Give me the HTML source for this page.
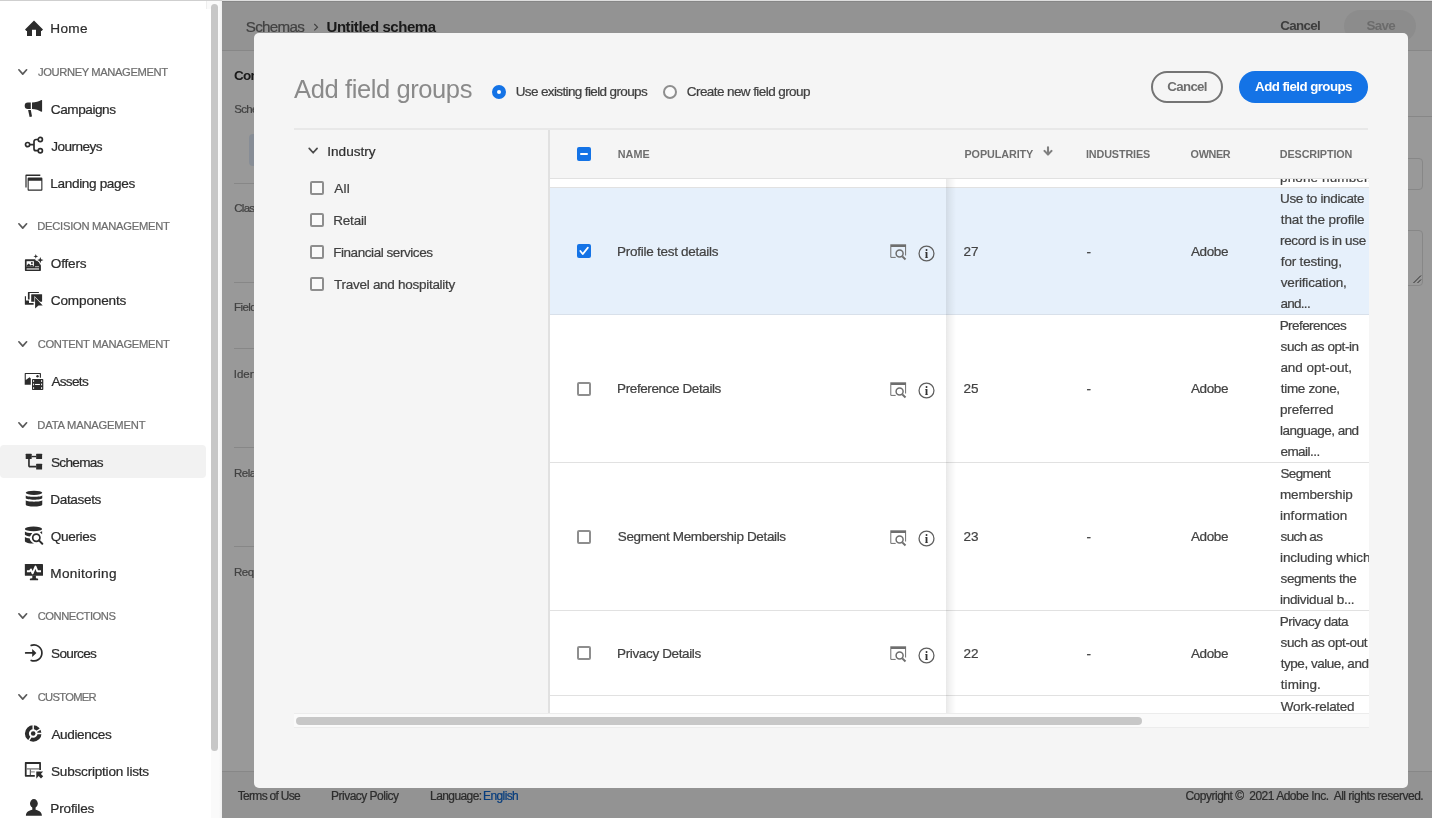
<!DOCTYPE html>
<html lang="en">
<head>
<meta charset="utf-8">
<title>Add field groups</title>
<style>
html,body{margin:0;padding:0;width:1432px;height:818px;overflow:hidden;background:#fff;}
body{font-family:"Liberation Sans",Arial,sans-serif;position:relative;}
.t{position:absolute;white-space:pre;line-height:1;-webkit-text-stroke:0.22px currentColor;}
.abs{position:absolute;}
#side{position:absolute;left:0;top:0;width:222px;height:818px;background:#fff;overflow:hidden;}
#side,#page,#modal{will-change:transform;}
#side .selbg{position:absolute;left:0;top:445px;width:205.5px;height:33px;border-radius:4px;background:#f2f2f2;}
#side .track{position:absolute;left:211px;top:0;width:11px;height:818px;background:linear-gradient(90deg,#fafafa 0,#fafafa 8px,#efefef 11px);}
#side .thumb{position:absolute;left:211px;top:4px;width:7px;height:747px;border-radius:4px;background:#c7c7c7;}
#side svg{position:absolute;overflow:visible;}
#page{position:absolute;left:222px;top:0;width:1210px;height:818px;background:#fff;overflow:hidden;}
#page .hdr{position:absolute;left:0;top:0;width:1210px;height:50px;background:#f5f5f5;border-bottom:1px solid #e1e1e1;}
#page .ftr{position:absolute;left:0;top:771px;width:1210px;height:47px;background:#f5f5f5;border-top:1px solid #e1e1e1;box-sizing:border-box;}
#page .save{position:absolute;left:1122px;top:10px;width:72px;height:32px;border-radius:16px;background:#eaeaea;}
#page .hl{position:absolute;height:1px;background:#e1e1e1;}
#ovl{position:absolute;left:222px;top:0;width:1210px;height:818px;background:rgba(0,0,0,.4);}
#topline{position:absolute;left:0;top:0;width:1432px;height:1px;background:linear-gradient(90deg,#cfcfcf 0,#cfcfcf 222px,#dedede 222px);}
#topline2{position:absolute;left:222px;top:1px;width:1210px;height:1px;background:#868686;}
#modal{position:absolute;left:254px;top:33px;width:1154px;height:755px;background:#f5f5f5;border-radius:5px;overflow:hidden;}
#modal .divider{position:absolute;left:40px;top:95px;width:1074px;height:2px;background:#e8e8e8;}
#modal .vline{position:absolute;left:294px;top:97px;width:2px;height:583px;background:#e1e1e1;}
.radio{position:absolute;width:14px;height:14px;border-radius:50%;box-sizing:border-box;}
.radio.on{border:5px solid #1473e6;background:#fff;}
.radio.off{border:2px solid #8e8e8e;background:#fafafa;}
.btn{position:absolute;height:32px;border-radius:16px;box-sizing:border-box;}
.cb{position:absolute;width:14px;height:14px;box-sizing:border-box;border:2px solid #8e8e8e;border-radius:2px;background:#fafafa;}
.cb.on{border:0;background:#1473e6;}
#thead{position:absolute;left:296px;top:97px;width:819px;height:48px;border-bottom:1px solid #e1e1e1;}
#tbody{position:absolute;left:296px;top:146px;width:819px;height:534px;background:#fff;overflow:hidden;}
#tbody .row{position:absolute;left:0;width:819px;border-bottom:1px solid #e1e1e1;background:#fff;}
#tbody .row.sel{background:#e6f0fb;border-bottom-color:#d8e0ea;}
#tbody .shadow{position:absolute;left:396px;top:0;width:10px;height:534px;background:linear-gradient(90deg,rgba(0,0,0,.09),rgba(0,0,0,.05) 35%,rgba(0,0,0,0) 100%);}
#tbody svg{position:absolute;overflow:visible;}
#hscroll{position:absolute;left:40px;top:680px;width:1075px;height:15px;background:#fafafa;border-top:1px solid #ececec;border-bottom:1px solid #ececec;box-sizing:border-box;}
#hscroll i{position:absolute;left:2px;top:3px;width:846px;height:8px;border-radius:4px;background:#c7c7c7;}
</style>
</head>
<body>
<div id="side">
<div class="selbg"></div>
<div class="track"></div><div class="abs" style="left:206px;top:1px;width:5px;height:8px;background:#fafafa;border-left:1px solid #eee"></div><div class="thumb"></div>
<svg style="left:25px;top:19px" width="18" height="18" viewBox="0 0 18 18" fill="#2c2c2c" ><path d="M9 1.6 L18 10.4 L16.6 11.9 H16 V17 H11 V10.8 H7 V17 H2 V11.9 H1.4 L0 10.4z"/></svg>
<svg style="left:25px;top:100px" width="18" height="18" viewBox="0 0 18 18" fill="#2c2c2c" ><path d="M2.9 2.5H5.8V8.9H2.9a3.2 3.2 0 0 1 0-6.4z"/><path d="M7 2.5C10.5 2.5 14 1.8 16.3.1L17.1.3V11.5l-.8.2C14 10 10.5 8.9 7 8.9z"/><path d="M3.1 10.1H5.8L7 16.6 4.6 17z"/></svg>
<svg style="left:25px;top:137px" width="18" height="18" viewBox="0 0 18 18" fill="#2c2c2c" ><g fill="none" stroke="#2c2c2c" stroke-width="1.7"><circle cx="2.6" cy="7.6" r="2.1"/><circle cx="15.3" cy="2.5" r="2.1"/><circle cx="15.3" cy="13.7" r="2.1"/><path d="M4.7 7.6H9M13.2 2.5H11a2 2 0 0 0-2 2v7.2a2 2 0 0 0 2 2h2.2"/></g></svg>
<svg style="left:25px;top:174px" width="18" height="18" viewBox="0 0 18 18" fill="#2c2c2c" ><path fill-rule="evenodd" d="M3.5 3.6h13a.9.9 0 0 1 .9.9v11.3a.9.9 0 0 1-.9.9h-13a.9.9 0 0 1-.9-.9V4.500a.9.9 0 0 1 .9-.9zM3.7 6.8v8.8h12.600V6.800z"/><path d="M1.200.5h14.100v1.600H1.600v11.400H.4V1.300a.8.8 0 0 1 .8-.8z"/></svg>
<svg style="left:25px;top:254px" width="18" height="18" viewBox="0 0 18 18" fill="#2c2c2c" ><path d="M.6 5.300H9.800L15.900 9.500V16.200a.7.7 0 0 1-.7.7H.6a.7.7 0 0 1-.7-.7V6a.7.7 0 0 1 .7-.7z"/><rect x="1.600" y="7.200" width="7.300" height="5.600" fill="#fff"/><path d="M1.600 12.800V11.600L3.800 9.400 5.600 11.600 7 10.600 8.900 12.300V12.800z"/><circle cx="6.900" cy="8.900" r="1"/><rect x="1.600" y="14.200" width="12.400" height="1.500" fill="#c4c4c4"/><rect x="10" y="12.100" width="4" height="1.100" fill="#b0b0b0"/><path d="M15.30 2.90L16.11 5.29L18.50 6.10L16.11 6.91L15.30 9.30L14.49 6.91L12.10 6.10L14.49 5.29z" stroke="#fff" stroke-width="1.400" paint-order="stroke"/><path d="M10.80 0.00L11.41 1.79L13.20 2.40L11.41 3.01L10.80 4.80L10.19 3.01L8.40 2.40L10.19 1.79z" stroke="#fff" stroke-width="1" paint-order="stroke"/></svg>
<svg style="left:25px;top:291px" width="18" height="18" viewBox="0 0 18 18" fill="#2c2c2c" ><path d="M-.15 5.300H1V9.500H4V12H8.600V13.800H.4a.55.55 0 0 1-.55-.55z"/><path d="M3.400 1H13.900V2.100H4.600V8.500H2.900V1.500a.5.5 0 0 1 .5-.5z"/><rect x="6.200" y="3.200" width="10.900" height="7.550" rx=".5"/><path d="M10.100 6.600L17.700 14.500 13.500 14.600 10.100 17.600z" stroke="#fff" stroke-width="1.300" paint-order="stroke"/></svg>
<svg style="left:25px;top:372px" width="18" height="18" viewBox="0 0 18 18" fill="#2c2c2c" ><path d="M.3 1H15.300a.65.65 0 0 1 .65.65V5.800H14.800V2.100H.8V8L4.600 5.200 5.800 6.400V12.800H-.3V1.600A.6.6 0 0 1 .3 1z"/><circle cx="12.500" cy="4.250" r="1.200"/><rect x="7" y="7" width="11.300" height="10.900" rx=".7"/><g fill="#fff"><rect x="8.100" y="8.200" width="1" height="1.700"/><rect x="8.100" y="11.600" width="1" height="1.700"/><rect x="8.100" y="15.200" width="1" height="1.700"/><rect x="16.100" y="8.200" width="1" height="1.700"/><rect x="16.100" y="11.600" width="1" height="1.700"/><rect x="16.100" y="15.200" width="1" height="1.700"/><rect x="10.100" y="11.950" width="4.800" height="1.050"/></g></svg>
<svg style="left:25px;top:453px" width="18" height="18" viewBox="0 0 18 18" fill="#2c2c2c" ><rect x=".7" y=".8" width="6" height="5.300" rx=".5"/><rect x="11.150" y=".8" width="5.950" height="5.300" rx=".5"/><rect x="11.150" y="10.750" width="5.950" height="5.850" rx=".5"/><path d="M6.500 3.550H11.300" stroke="#2c2c2c" stroke-width="1.400" fill="none"/><path d="M3.950 6V12.650a1 1 0 0 0 1 1H11.300" stroke="#2c2c2c" stroke-width="1.650" fill="none"/></svg>
<svg style="left:25px;top:490px" width="18" height="18" viewBox="0 0 18 18" fill="#2c2c2c" ><ellipse cx="9" cy="2.800" rx="8.250" ry="2.150"/><path d="M.75 5.200C.75 7.300 17.250 7.300 17.250 5.200V8C17.250 10.300 .75 10.300 .75 8z"/><path d="M.75 10C.75 12.200 17.250 12.200 17.250 10V14.400C17.250 17.200 .75 17.200 .75 14.400z"/></svg>
<svg style="left:25px;top:527px" width="18" height="18" viewBox="0 0 18 18" fill="#2c2c2c" ><ellipse cx="8.500" cy="1.900" rx="8.600" ry="2.300"/><path d="M-.1 4.500C1 5.500 4 6 7.200 6L5 9.500C2.500 9.200 .5 8.600-.1 7.800z"/><path d="M-.1 9.900C1 10.800 2.800 11.100 4.600 11.300 4.900 13.400 6.500 15.500 9 16.600 4.500 16.700.5 15.700-.1 14.300z"/><path d="M14.900 5.200L17.100 4.300V7.300z"/><circle cx="11.300" cy="10.750" r="3.600" fill="none" stroke="#2c2c2c" stroke-width="1.700"/><path d="M13.900 13.400L17.300 16.700" stroke="#2c2c2c" stroke-width="2" stroke-linecap="round"/></svg>
<svg style="left:25px;top:564px" width="18" height="18" viewBox="0 0 18 18" fill="#2c2c2c" ><rect x="-.15" y="0" width="18.150" height="11.800" rx=".6"/><path d="M7.300 11.500H10.900V14.100C10.900 14.400 11.600 14.500 12.500 14.500a.7.900 0 0 1 0 1.800H5.500a.7.900 0 0 1 0-1.800C6.500 14.500 7.300 14.400 7.300 14.100z"/><path d="M1.900 7.200H4.800L5.900 5.400 7.600 9.300 10.500 2.500 12.300 7.200H16" fill="none" stroke="#fff" stroke-width="1.900" stroke-linejoin="round"/></svg>
<svg style="left:25px;top:644px" width="18" height="18" viewBox="0 0 18 18" fill="#2c2c2c" ><path d="M6.200 1.370A8 8 0 1 1 6.200 16.430" fill="none" stroke="#2c2c2c" stroke-width="1.700" stroke-linecap="round"/><path d="M.7 8.900H8" stroke="#2c2c2c" stroke-width="1.700" stroke-linecap="round"/><path d="M7.200 4.900L11.400 8.900 7.200 12.900z"/></svg>
<svg style="left:25px;top:725px" width="18" height="18" viewBox="0 0 18 18" fill="#2c2c2c" ><circle cx="8.200" cy="8.500" r="6.300" fill="none" stroke="#2c2c2c" stroke-width="4"/><path d="M8.20 5.90L8.20 -0.70M10.40 7.12L16.00 3.62M10.80 8.50L17.40 8.50M6.82 10.70L3.32 16.30" stroke="#fff" stroke-width="1.400" fill="none"/><circle cx="8.200" cy="8.500" r="2.300"/></svg>
<svg style="left:25px;top:762px" width="18" height="18" viewBox="0 0 18 18" fill="#2c2c2c" ><path d="M.5.100H15.300a.65.65 0 0 1 .65.650V8H14.200V2H1.600V13H9.800V14.700H.5a.65.65 0 0 1-.65-.650V.75A.65.650 0 0 1 .5.100z"/><rect x="1.600" y="6.300" width="12.600" height="1.200" fill="#6a6a6a"/><rect x="4.800" y="7.400" width="1.050" height="5.700" fill="#4a4a4a"/><rect x="5.850" y="9.400" width="3.950" height="1" fill="#7a7a7a"/><path d="M11.300 9.600H18.100L15.900 11.900 18.200 14.300 16 16.500 13.600 14.100 11.300 16.700z"/></svg>
<svg style="left:25px;top:799px" width="18" height="19" viewBox="0 0 18 19" fill="#2c2c2c" ><ellipse cx="8.900" cy="4.500" rx="3.900" ry="4.400"/><path d="M7.300 7.500V10.800C4 11.400 1 13 .9 16.700H16.900C16.800 13 13.800 11.400 10.600 10.800V7.500z"/></svg>
<svg style="left:17px;top:67px" width="12" height="10" viewBox="0 0 12 10" fill="none" stroke="#5a5a5a" stroke-width="1.700" stroke-linecap="round" stroke-linejoin="round"><path d="M1.900 2.800L5.750 7.100 9.600 2.800"/></svg>
<svg style="left:17px;top:221px" width="12" height="10" viewBox="0 0 12 10" fill="none" stroke="#5a5a5a" stroke-width="1.700" stroke-linecap="round" stroke-linejoin="round"><path d="M1.900 2.800L5.750 7.100 9.600 2.800"/></svg>
<svg style="left:17px;top:339px" width="12" height="10" viewBox="0 0 12 10" fill="none" stroke="#5a5a5a" stroke-width="1.700" stroke-linecap="round" stroke-linejoin="round"><path d="M1.900 2.800L5.750 7.100 9.600 2.800"/></svg>
<svg style="left:17px;top:420px" width="12" height="10" viewBox="0 0 12 10" fill="none" stroke="#5a5a5a" stroke-width="1.700" stroke-linecap="round" stroke-linejoin="round"><path d="M1.900 2.800L5.750 7.100 9.600 2.800"/></svg>
<svg style="left:17px;top:611px" width="12" height="10" viewBox="0 0 12 10" fill="none" stroke="#5a5a5a" stroke-width="1.700" stroke-linecap="round" stroke-linejoin="round"><path d="M1.900 2.800L5.750 7.100 9.600 2.800"/></svg>
<svg style="left:17px;top:692px" width="12" height="10" viewBox="0 0 12 10" fill="none" stroke="#5a5a5a" stroke-width="1.700" stroke-linecap="round" stroke-linejoin="round"><path d="M1.900 2.800L5.750 7.100 9.600 2.800"/></svg>

<span class="t" style="left:50.3px;top:21.6px;font-size:13.6px;color:#2c2c2c;letter-spacing:0.31px;">Home</span>
<span class="t" style="left:50.8px;top:102.6px;font-size:13.6px;color:#2c2c2c;letter-spacing:-0.44px;">Campaigns</span>
<span class="t" style="left:51.2px;top:139.6px;font-size:13.6px;color:#2c2c2c;letter-spacing:-0.56px;">Journeys</span>
<span class="t" style="left:50.3px;top:176.6px;font-size:13.6px;color:#2c2c2c;letter-spacing:-0.35px;">Landing pages</span>
<span class="t" style="left:50.8px;top:256.6px;font-size:13.6px;color:#2c2c2c;letter-spacing:-0.2px;">Offers</span>
<span class="t" style="left:50.8px;top:293.6px;font-size:13.6px;color:#2c2c2c;letter-spacing:-0.17px;">Components</span>
<span class="t" style="left:51.4px;top:374.6px;font-size:13.6px;color:#2c2c2c;letter-spacing:-0.7px;">Assets</span>
<span class="t" style="left:51.0px;top:455.6px;font-size:13.6px;color:#2c2c2c;letter-spacing:-0.7px;">Schemas</span>
<span class="t" style="left:50.3px;top:492.6px;font-size:13.6px;color:#2c2c2c;letter-spacing:-0.37px;">Datasets</span>
<span class="t" style="left:50.8px;top:529.6px;font-size:13.6px;color:#2c2c2c;letter-spacing:-0.36px;">Queries</span>
<span class="t" style="left:50.3px;top:566.6px;font-size:13.6px;color:#2c2c2c;letter-spacing:0.31px;">Monitoring</span>
<span class="t" style="left:51.0px;top:646.6px;font-size:13.6px;color:#2c2c2c;letter-spacing:-0.67px;">Sources</span>
<span class="t" style="left:51.4px;top:727.6px;font-size:13.6px;color:#2c2c2c;letter-spacing:-0.4px;">Audiences</span>
<span class="t" style="left:51.0px;top:764.6px;font-size:13.6px;color:#2c2c2c;letter-spacing:-0.23px;">Subscription lists</span>
<span class="t" style="left:50.3px;top:801.6px;font-size:13.6px;color:#2c2c2c;letter-spacing:-0.18px;">Profiles</span>
<span class="t" style="left:38.1px;top:66.6px;font-size:11.2px;color:#6e6e6e;letter-spacing:-0.39px;">JOURNEY MANAGEMENT</span>
<span class="t" style="left:37.3px;top:220.6px;font-size:11.2px;color:#6e6e6e;letter-spacing:-0.27px;">DECISION MANAGEMENT</span>
<span class="t" style="left:37.7px;top:338.6px;font-size:11.2px;color:#6e6e6e;letter-spacing:-0.3px;">CONTENT MANAGEMENT</span>
<span class="t" style="left:37.3px;top:419.6px;font-size:11.2px;color:#6e6e6e;letter-spacing:-0.19px;">DATA MANAGEMENT</span>
<span class="t" style="left:37.7px;top:610.6px;font-size:11.2px;color:#6e6e6e;letter-spacing:-0.44px;">CONNECTIONS</span>
<span class="t" style="left:37.7px;top:691.6px;font-size:11.2px;color:#6e6e6e;letter-spacing:-0.7px;">CUSTOMER</span>
</div>
<div id="page">
<div class="hdr"></div>
<div class="save"></div>
<div class="ftr"></div>
<svg class="abs" style="left:90px;top:22px" width="8" height="10" viewBox="0 0 8 10" fill="none" stroke="#6e6e6e" stroke-width="1.200"><path d="M2.300 2L5.500 5.200 2.300 8.400"/></svg>
<div class="hl" style="left:12px;top:183px;width:300px;background:#e1e1e1"></div>
<div class="hl" style="left:12px;top:282px;width:300px;background:#e1e1e1"></div>
<div class="hl" style="left:12px;top:348px;width:300px;background:#e1e1e1"></div>
<div class="hl" style="left:12px;top:447px;width:300px;background:#e1e1e1"></div>
<div class="hl" style="left:12px;top:546px;width:300px;background:#e1e1e1"></div>
<div class="abs" style="left:27px;top:134px;width:200px;height:32px;border-radius:4px;background:#e2ecfa"></div>
<div class="hl" style="left:1078px;top:116px;width:132px;background:#e1e1e1"></div>
<div class="abs" style="left:1100px;top:158px;width:101px;height:32px;box-sizing:border-box;border:1px solid #e1e1e1;border-radius:4px;background:#fff"></div>
<div class="abs" style="left:1100px;top:230px;width:101px;height:56px;box-sizing:border-box;border:1px solid #e1e1e1;border-radius:4px;background:#fff"></div>
<svg class="abs" style="left:1190px;top:274px" width="10" height="10" viewBox="0 0 10 10" stroke="#4b4b4b" stroke-width="1" fill="none"><path d="M1.500 9L9 1.500M5.500 9L9 5.500"/></svg>

<span class="t" style="left:23.8px;top:19.1px;font-size:15.2px;color:#6e6e6e;letter-spacing:-0.7px;">Schemas</span>
<span class="t" style="left:104.5px;top:19.3px;font-size:15px;color:#2c2c2c;font-weight:700;-webkit-text-stroke:0;letter-spacing:-0.45px;">Untitled schema</span>
<span class="t" style="left:1058.3px;top:18.7px;font-size:13.4px;color:#686868;font-weight:700;-webkit-text-stroke:0;letter-spacing:-0.7px;">Cancel</span>
<span class="t" style="left:1144.5px;top:18.7px;font-size:13.4px;color:#b3b3b3;font-weight:700;-webkit-text-stroke:0;letter-spacing:-0.7px;">Save</span>
<span class="t" style="left:15.8px;top:789.8px;font-size:12px;color:#4b4b4b;letter-spacing:-0.7px;">Terms of Use</span>
<span class="t" style="left:109.1px;top:789.8px;font-size:12px;color:#4b4b4b;letter-spacing:-0.52px;">Privacy Policy</span>
<span class="t" style="left:208.1px;top:789.8px;font-size:12px;color:#4b4b4b;letter-spacing:-0.59px;">Language:</span>
<span class="t" style="left:261.1px;top:789.8px;font-size:12px;color:#0d66d0;letter-spacing:-0.61px;">English</span>
<span class="t" style="left:963.4px;top:789.8px;font-size:12px;color:#4b4b4b;letter-spacing:-0.49px;">Copyright ©  2021 Adobe Inc.  All rights reserved.</span>
<span class="t" style="left:11.9px;top:69.2px;font-size:13.5px;color:#2c2c2c;font-weight:700;-webkit-text-stroke:0;letter-spacing:-0.7px;">Composition</span>
<span class="t" style="left:12.3px;top:104.1px;font-size:11.5px;color:#6e6e6e;letter-spacing:-0.7px;">Schema</span>
<span class="t" style="left:12.2px;top:203.1px;font-size:11.5px;color:#6e6e6e;letter-spacing:-0.7px;">Class</span>
<span class="t" style="left:11.9px;top:302.1px;font-size:11.5px;color:#6e6e6e;letter-spacing:-0.53px;">Field groups</span>
<span class="t" style="left:11.8px;top:369.1px;font-size:11.5px;color:#6e6e6e;letter-spacing:-0.04px;">Identities</span>
<span class="t" style="left:11.9px;top:468.1px;font-size:11.5px;color:#6e6e6e;letter-spacing:-0.46px;">Relationships</span>
<span class="t" style="left:11.9px;top:567.1px;font-size:11.5px;color:#6e6e6e;letter-spacing:-0.37px;">Required fields</span>
</div>
<div id="ovl"></div>
<div id="topline"></div><div id="topline2"></div>
<div id="modal">
<div class="divider"></div>
<div class="vline"></div>
<div class="radio on" style="left:238px;top:52px"></div>
<div class="radio off" style="left:409px;top:52px"></div>
<div class="btn" style="left:897px;top:38px;width:72px;border:2px solid #747474;"></div>
<div class="btn" style="left:985px;top:38px;width:129px;background:#1473e6;"></div>
<svg class="abs" style="left:53px;top:113px" width="12" height="10" viewBox="0 0 12 10" fill="none" stroke="#4b4b4b" stroke-width="1.700" stroke-linecap="round" stroke-linejoin="round"><path d="M2.200 2.400L6.150 6.800 10.100 2.400"/></svg>
<div class="cb" style="left:56px;top:148px"></div>
<div class="cb" style="left:56px;top:180px"></div>
<div class="cb" style="left:56px;top:212px"></div>
<div class="cb" style="left:56px;top:244px"></div>
<div class="cb on" style="left:323px;top:114px"><i style="position:absolute;left:2.500px;top:5.700px;width:8.800px;height:2.600px;border-radius:1px;background:#fff"></i></div>
<svg class="abs" style="left:789px;top:113px" width="10" height="10" viewBox="0 0 10 10" fill="none" stroke="#808080" stroke-width="2.100" stroke-linecap="round" stroke-linejoin="round"><path d="M5 1.300V8M1.500 4.900L5 8.600 8.500 4.900"/></svg>

<div id="thead"></div>
<div id="tbody">
<div class="row sel" style="top:9px;height:126px"></div>
<div class="row" style="top:136px;height:147px"></div>
<div class="row" style="top:284px;height:147px"></div>
<div class="row" style="top:432px;height:84px"></div>
<div class="row" style="top:517px;height:21px"></div>
<div class="row" style="top:-13px;height:21px"></div>
<span class="t" style="left:67.1px;top:65.5px;font-size:13.5px;color:#424242;letter-spacing:-0.27px;">Profile test details</span>
<span class="t" style="left:413.5px;top:65.5px;font-size:13.5px;color:#424242;">27</span>
<span class="t" style="left:536.5px;top:65.5px;font-size:13.5px;color:#424242;">-</span>
<span class="t" style="left:640.9px;top:65.5px;font-size:13.5px;color:#424242;letter-spacing:-0.35px;">Adobe</span>
<span class="t" style="left:730.0px;top:12.8px;font-size:13.5px;color:#424242;letter-spacing:-0.34px;">Use to indicate</span>
<span class="t" style="left:730.8px;top:33.8px;font-size:13.5px;color:#424242;letter-spacing:-0.12px;">that the profile</span>
<span class="t" style="left:730.0px;top:54.8px;font-size:13.5px;color:#424242;letter-spacing:-0.36px;">record is in use</span>
<span class="t" style="left:730.8px;top:75.8px;font-size:13.5px;color:#424242;letter-spacing:-0.17px;">for testing,</span>
<span class="t" style="left:730.8px;top:96.8px;font-size:13.5px;color:#424242;letter-spacing:-0.19px;">verification,</span>
<span class="t" style="left:730.4px;top:117.8px;font-size:13.5px;color:#424242;letter-spacing:-0.7px;">and...</span>
<span class="t" style="left:67.1px;top:203.0px;font-size:13.5px;color:#424242;letter-spacing:-0.4px;">Preference Details</span>
<span class="t" style="left:413.5px;top:203.0px;font-size:13.5px;color:#424242;">25</span>
<span class="t" style="left:536.5px;top:203.0px;font-size:13.5px;color:#424242;">-</span>
<span class="t" style="left:640.9px;top:203.0px;font-size:13.5px;color:#424242;letter-spacing:-0.35px;">Adobe</span>
<span class="t" style="left:729.7px;top:139.8px;font-size:13.5px;color:#424242;letter-spacing:-0.57px;">Preferences</span>
<span class="t" style="left:730.6px;top:160.8px;font-size:13.5px;color:#424242;letter-spacing:-0.43px;">such as opt-in</span>
<span class="t" style="left:730.4px;top:181.8px;font-size:13.5px;color:#424242;letter-spacing:-0.05px;">and opt-out,</span>
<span class="t" style="left:730.8px;top:202.8px;font-size:13.5px;color:#424242;letter-spacing:-0.33px;">time zone,</span>
<span class="t" style="left:730.0px;top:223.8px;font-size:13.5px;color:#424242;letter-spacing:-0.16px;">preferred</span>
<span class="t" style="left:730.0px;top:244.8px;font-size:13.5px;color:#424242;letter-spacing:-0.54px;">language, and</span>
<span class="t" style="left:730.4px;top:265.8px;font-size:13.5px;color:#424242;letter-spacing:-0.52px;">email...</span>
<span class="t" style="left:67.8px;top:351.0px;font-size:13.5px;color:#424242;letter-spacing:-0.35px;">Segment Membership Details</span>
<span class="t" style="left:413.5px;top:351.0px;font-size:13.5px;color:#424242;">23</span>
<span class="t" style="left:536.5px;top:351.0px;font-size:13.5px;color:#424242;">-</span>
<span class="t" style="left:640.9px;top:351.0px;font-size:13.5px;color:#424242;letter-spacing:-0.35px;">Adobe</span>
<span class="t" style="left:730.4px;top:287.8px;font-size:13.5px;color:#424242;letter-spacing:-0.63px;">Segment</span>
<span class="t" style="left:730.0px;top:308.8px;font-size:13.5px;color:#424242;letter-spacing:-0.17px;">membership</span>
<span class="t" style="left:730.0px;top:329.8px;font-size:13.5px;color:#424242;letter-spacing:0.04px;">information</span>
<span class="t" style="left:730.6px;top:350.8px;font-size:13.5px;color:#424242;letter-spacing:-0.7px;">such as</span>
<span class="t" style="left:730.0px;top:371.8px;font-size:13.5px;color:#424242;letter-spacing:-0.08px;">including which</span>
<span class="t" style="left:730.6px;top:392.8px;font-size:13.5px;color:#424242;letter-spacing:-0.44px;">segments the</span>
<span class="t" style="left:730.0px;top:413.8px;font-size:13.5px;color:#424242;letter-spacing:-0.3px;">individual b...</span>
<span class="t" style="left:67.1px;top:467.5px;font-size:13.5px;color:#424242;letter-spacing:-0.37px;">Privacy Details</span>
<span class="t" style="left:413.5px;top:467.5px;font-size:13.5px;color:#424242;">22</span>
<span class="t" style="left:536.5px;top:467.5px;font-size:13.5px;color:#424242;">-</span>
<span class="t" style="left:640.9px;top:467.5px;font-size:13.5px;color:#424242;letter-spacing:-0.35px;">Adobe</span>
<span class="t" style="left:729.7px;top:435.8px;font-size:13.5px;color:#424242;letter-spacing:-0.49px;">Privacy data</span>
<span class="t" style="left:730.6px;top:456.8px;font-size:13.5px;color:#424242;letter-spacing:-0.38px;">such as opt-out</span>
<span class="t" style="left:730.8px;top:477.8px;font-size:13.5px;color:#424242;letter-spacing:-0.48px;">type, value, and</span>
<span class="t" style="left:730.8px;top:498.8px;font-size:13.5px;color:#424242;letter-spacing:0.04px;">timing.</span>
<span class="t" style="left:730.8px;top:520.8px;font-size:13.5px;color:#424242;letter-spacing:-0.3px;">Work-related</span>
<span class="t" style="left:730.0px;top:-8.2px;font-size:13.5px;color:#424242;letter-spacing:0.12px;">phone number,</span>
<div class="cb on" style="left:27px;top:65.0px"><svg style="left:0;top:0" width="14" height="14" viewBox="0 0 14 14" fill="none" stroke="#fff" stroke-width="1.700" stroke-linecap="round" stroke-linejoin="round"><path d="M3.300 6.900L5.700 10.100 10.900 3.600"/></svg></div>
<svg style="left:340px;top:65.4px" width="17" height="17" viewBox="0 0 17 17" fill="none" stroke="#6e6e6e"><path d="M.3.300H16.100V3H.3z" fill="#6e6e6e" stroke="none"/><path d="M.8 3V13.400H5.700M15.600 3V11.500" stroke-width="1"/><circle cx="9.600" cy="9.600" r="3.500" stroke-width="1.500"/><path d="M12.300 12.400L15.500 15.500" stroke-width="2"/></svg>
<svg style="left:368.20000000000005px;top:65.7px" width="17" height="17" viewBox="0 0 17 17" fill="none"><circle cx="8.500" cy="8.500" r="7.450" stroke="#5e5e5e" stroke-width="1.250"/><text x="8.550" y="13.100" text-anchor="middle" font-family="Liberation Serif,serif" font-weight="700" font-size="12.500" fill="#333">i</text></svg>
<div class="cb" style="left:27px;top:202.5px;background:#fff"></div>
<svg style="left:340px;top:202.9px" width="17" height="17" viewBox="0 0 17 17" fill="none" stroke="#6e6e6e"><path d="M.3.300H16.100V3H.3z" fill="#6e6e6e" stroke="none"/><path d="M.8 3V13.400H5.700M15.600 3V11.500" stroke-width="1"/><circle cx="9.600" cy="9.600" r="3.500" stroke-width="1.500"/><path d="M12.300 12.400L15.500 15.500" stroke-width="2"/></svg>
<svg style="left:368.20000000000005px;top:203.2px" width="17" height="17" viewBox="0 0 17 17" fill="none"><circle cx="8.500" cy="8.500" r="7.450" stroke="#5e5e5e" stroke-width="1.250"/><text x="8.550" y="13.100" text-anchor="middle" font-family="Liberation Serif,serif" font-weight="700" font-size="12.500" fill="#333">i</text></svg>
<div class="cb" style="left:27px;top:350.5px;background:#fff"></div>
<svg style="left:340px;top:350.9px" width="17" height="17" viewBox="0 0 17 17" fill="none" stroke="#6e6e6e"><path d="M.3.300H16.100V3H.3z" fill="#6e6e6e" stroke="none"/><path d="M.8 3V13.400H5.700M15.600 3V11.500" stroke-width="1"/><circle cx="9.600" cy="9.600" r="3.500" stroke-width="1.500"/><path d="M12.300 12.400L15.500 15.500" stroke-width="2"/></svg>
<svg style="left:368.20000000000005px;top:351.2px" width="17" height="17" viewBox="0 0 17 17" fill="none"><circle cx="8.500" cy="8.500" r="7.450" stroke="#5e5e5e" stroke-width="1.250"/><text x="8.550" y="13.100" text-anchor="middle" font-family="Liberation Serif,serif" font-weight="700" font-size="12.500" fill="#333">i</text></svg>
<div class="cb" style="left:27px;top:467.0px;background:#fff"></div>
<svg style="left:340px;top:467.4px" width="17" height="17" viewBox="0 0 17 17" fill="none" stroke="#6e6e6e"><path d="M.3.300H16.100V3H.3z" fill="#6e6e6e" stroke="none"/><path d="M.8 3V13.400H5.700M15.600 3V11.500" stroke-width="1"/><circle cx="9.600" cy="9.600" r="3.500" stroke-width="1.500"/><path d="M12.300 12.400L15.500 15.500" stroke-width="2"/></svg>
<svg style="left:368.20000000000005px;top:467.7px" width="17" height="17" viewBox="0 0 17 17" fill="none"><circle cx="8.500" cy="8.500" r="7.450" stroke="#5e5e5e" stroke-width="1.250"/><text x="8.550" y="13.100" text-anchor="middle" font-family="Liberation Serif,serif" font-weight="700" font-size="12.500" fill="#333">i</text></svg>

<div class="shadow"></div>
</div>
<div id="hscroll"><i></i></div>
<span class="t" style="left:40.1px;top:44.3px;font-size:25.5px;color:#8a8a8a;-webkit-text-stroke:0;letter-spacing:-0.4px;">Add field groups</span>
<span class="t" style="left:261.7px;top:51.6px;font-size:13.5px;color:#404040;letter-spacing:-0.63px;">Use existing field groups</span>
<span class="t" style="left:432.8px;top:51.6px;font-size:13.5px;color:#404040;letter-spacing:-0.58px;">Create new field group</span>
<span class="t" style="left:913.3px;top:47.3px;font-size:13.3px;color:#6e6e6e;font-weight:700;-webkit-text-stroke:0;letter-spacing:-0.68px;">Cancel</span>
<span class="t" style="left:1001.1px;top:47.3px;font-size:13.3px;color:#ffffff;font-weight:700;-webkit-text-stroke:0;letter-spacing:-0.55px;">Add field groups</span>
<span class="t" style="left:73.3px;top:111.5px;font-size:13.6px;color:#303030;letter-spacing:-0.02px;">Industry</span>
<span class="t" style="left:80.3px;top:148.5px;font-size:13.5px;color:#404040;letter-spacing:0.19px;">All</span>
<span class="t" style="left:79.2px;top:180.5px;font-size:13.5px;color:#404040;letter-spacing:-0.19px;">Retail</span>
<span class="t" style="left:79.2px;top:212.5px;font-size:13.5px;color:#404040;letter-spacing:-0.44px;">Financial services</span>
<span class="t" style="left:80.1px;top:244.5px;font-size:13.5px;color:#404040;letter-spacing:-0.28px;">Travel and hospitality</span>
<span class="t" style="left:363.7px;top:115.8px;font-size:10.8px;color:#6e6e6e;font-weight:700;-webkit-text-stroke:0;letter-spacing:0.1px;">NAME</span>
<span class="t" style="left:710.5px;top:115.8px;font-size:10.8px;color:#6e6e6e;font-weight:700;-webkit-text-stroke:0;letter-spacing:-0.09px;">POPULARITY</span>
<span class="t" style="left:831.9px;top:115.8px;font-size:10.8px;color:#6e6e6e;font-weight:700;-webkit-text-stroke:0;letter-spacing:-0.11px;">INDUSTRIES</span>
<span class="t" style="left:936.6px;top:115.8px;font-size:10.8px;color:#6e6e6e;font-weight:700;-webkit-text-stroke:0;letter-spacing:-0.35px;">OWNER</span>
<span class="t" style="left:1025.8px;top:115.8px;font-size:10.8px;color:#6e6e6e;font-weight:700;-webkit-text-stroke:0;letter-spacing:-0.12px;">DESCRIPTION</span>
</div>
</body>
</html>
